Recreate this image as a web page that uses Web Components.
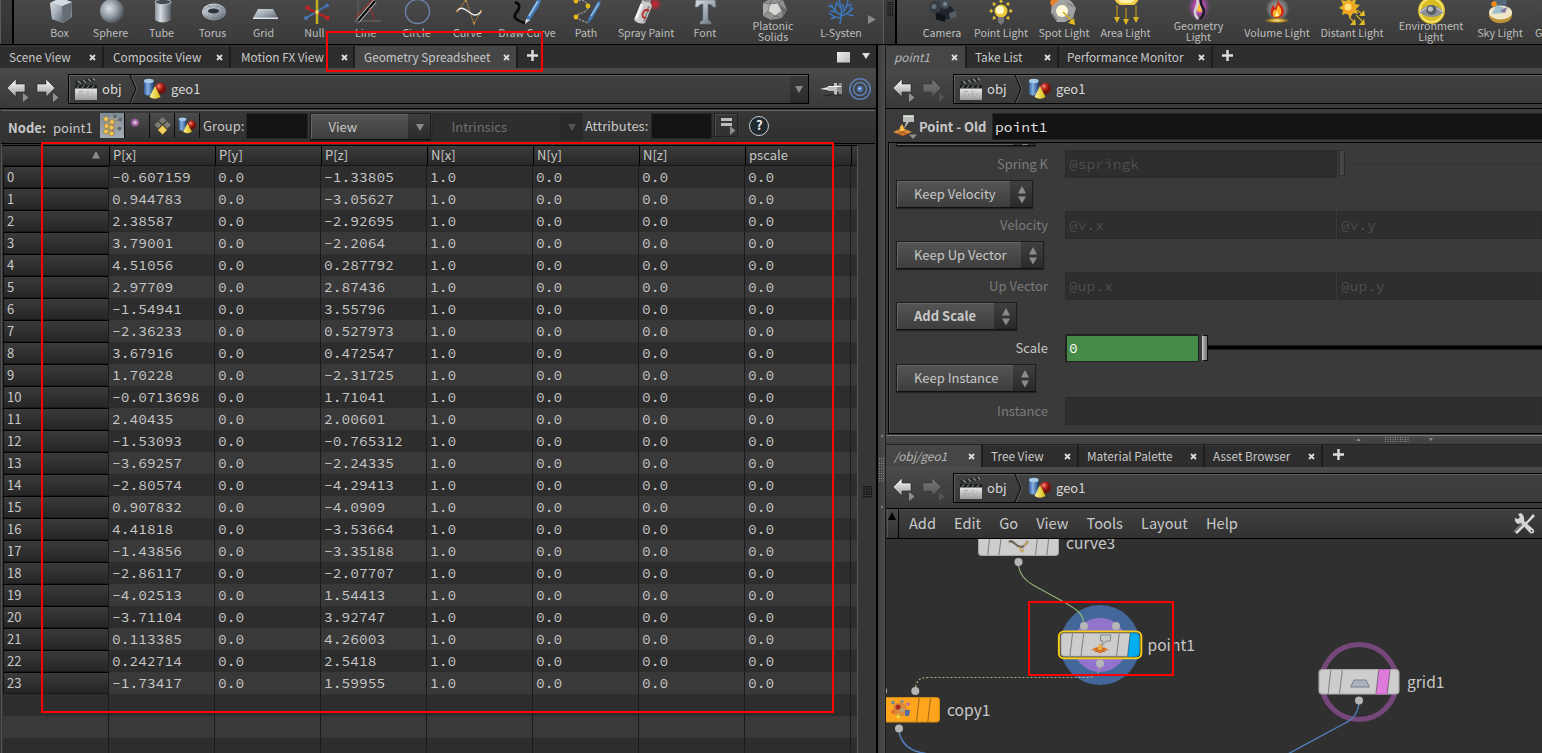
<!DOCTYPE html>
<html lang="en">
<head>
<meta charset="utf-8">
<title>Geometry Spreadsheet</title>
<style>
html,body{margin:0;height:100%;background:#303030;overflow:hidden}
body{font:13px/20px "Noto Sans CJK SC","Noto Sans",sans-serif;color:#c8c8c8}
</style>
</head>
<body>
<app-desktop></app-desktop>
<script>
const define = (name, css, html, after) => {
  customElements.define(name, class extends HTMLElement {
    connectedCallback() {
      if (this.shadowRoot) return;
      const root = this.attachShadow({ mode: 'open' });
      const body = typeof html === 'function' ? html(this) : html;
      root.innerHTML = `<style>*{box-sizing:border-box}${css}</style>${body}`;
      if (after) after(this, root);
    }
  });
};

/* ---------- icons ---------- */
const metal = id => `<linearGradient id="${id}" x1="0" x2="1" y1="0" y2="1"><stop offset="0" stop-color="#d6dce2"/><stop offset=".5" stop-color="#a3abb4"/><stop offset="1" stop-color="#5c646d"/></linearGradient>`;
const rays = (cx, cy, r1, r2, c) => [0,45,90,135,180,225,270,315].map(a => `<g transform="translate(${cx} ${cy}) rotate(${a})"><path d="M${r1} 0H${r2}" stroke="${c}" stroke-width="1.3"/><path d="M${r2-1}-2.2L${r2+2} 0L${r2-1} 2.2Z" fill="${c}"/></g>`).join('');
const ICONS = {
  box: [48,25,`<defs>${metal('m')}</defs><path d="M14 3L24-2L36 2V17L27 23L16 19Z" fill="#8a939c"/><path d="M14 3L26 6L27 23L16 19Z" fill="url(#m)"/><path d="M26 6L36 2L35 17L27 23Z" fill="#656c74"/><path d="M14 3L24-2L36 2L26 6Z" fill="#d5dbe1"/>`],
  sphere: [48,25,`<defs><radialGradient id="g" cx=".38" cy=".4" r=".65"><stop offset="0" stop-color="#dce2e8"/><stop offset=".5" stop-color="#98a1aa"/><stop offset="1" stop-color="#474d53"/></radialGradient></defs><circle cx="25" cy="11" r="12" fill="url(#g)"/>`],
  tube: [48,25,`<defs><linearGradient id="g"><stop offset="0" stop-color="#8b949d"/><stop offset=".35" stop-color="#d6dce2"/><stop offset="1" stop-color="#565d64"/></linearGradient></defs><path d="M17 2V20Q25 25 33 20V2Z" fill="url(#g)"/><ellipse cx="25" cy="2" rx="8" ry="2.600" fill="#434a51" stroke="#b9c0c7"/>`],
  torus: [48,25,`<defs>${metal('m')}</defs><ellipse cx="25" cy="12" rx="12" ry="8.500" fill="url(#m)"/><ellipse cx="24.500" cy="11" rx="5.500" ry="2.600" fill="#30353b"/><path d="M14 10q10-8 21-1M14 15q10 7 21 0M20 5l1 3M29 5l-1 3M18 18l2-3M25 20v-4M32 18l-3-3" stroke="#6d7883" fill="none" stroke-width=".6"/>`],
  grid: [48,25,`<defs>${metal('m')}</defs><path d="M18 9H33L38 18H13Z" fill="url(#m)"/><path d="M13 17.500H38V19H13Z" fill="#dfe3e7"/>`],
  null: [48,25,`<g stroke-width="2"><path d="M15 18L37 5" stroke="#4674b4"/><path d="M16 8L37 18" stroke="#b82222"/><path d="M26 0V24" stroke="#c0ae20" stroke-width="2.600"/></g><g fill="#4674b4"><circle cx="15" cy="18" r="2"/><circle cx="36" cy="5.500" r="2"/></g><g fill="#c02424"><circle cx="16.500" cy="7.500" r="2.200"/><circle cx="36.500" cy="18" r="2.200"/></g><circle cx="26" cy="12" r="1.700" fill="#f2e672"/>`],
  line: [48,25,`<path d="M12 21H39M16-1V24" stroke="#5d5d5d" stroke-width="1.400"/><path d="M16 21L33 1" stroke="#ddd" stroke-width="4"/><path d="M16 21L33 1" stroke="#090909" stroke-width="2.600"/><path d="M13 18L31-1M27 8Q31 12 32 20" stroke="#cf2323" stroke-width="1.300" stroke-dasharray="1.500 1.300" fill="none"/>`],
  circle: [48,25,`<circle cx="24.500" cy="11.500" r="12" fill="none" stroke="#6d82a8" stroke-width="1.400"/>`],
  curve: [48,25,`<path d="M13 12L22 0L30 24L37 11" stroke="#c0843b" stroke-width="1.300" stroke-dasharray="1.300 1.200" fill="none"/><path d="M13 11C17 6 21 9 25 12S32 17 37 12" stroke="#eee" stroke-width="1.500" fill="none"/><path d="M12 10h2v2h-2zM29 22h2v2h-2zM36 10h2v2h-2zM21 0h2v2h-2z" fill="#bd8b4b"/>`],
  draw: [48,25,`<path d="M12 2Q20 5 13 13Q8 19 22 23" stroke="#080808" stroke-width="2.600" fill="none"/><path d="M24 17L34 0H38L36 6L27 20L22 24Z" fill="#4579b6"/><path d="M26 16L35 1" stroke="#9bc4e9" stroke-width="1.500"/><path d="M23 19L27 20L22 24Z" fill="#ddd"/>`],
  path: [48,25,`<path d="M13 1Q23-2 26 6Q27 11 17 14Q12 18 21 21L26 23" stroke="#8f8f8f" stroke-width="1.400" stroke-dasharray="2.500 1" fill="none"/><path d="M27 17L36 1H39L37 7L30 19L25 24Z" fill="#4579b6"/><path d="M29 16L37 3" stroke="#9bc4e9" stroke-width="1.400"/><g fill="#e2bb13"><circle cx="14" cy="1" r="2.400"/><circle cx="26" cy="6" r="2.400"/><circle cx="14" cy="17" r="2.400"/></g>`],
  spray: [48,25,`<defs><radialGradient id="g"><stop offset="0" stop-color="#d9202a"/><stop offset="1" stop-color="#d9202a" stop-opacity="0"/></radialGradient></defs><circle cx="33" cy="4" r="7" fill="url(#g)"/><path d="M20 0L28 2L30 6L23 23Q17 25 12 20L19 4Z" fill="#c9c9c9"/><path d="M20 4L14 19" stroke="#f2f2f2" stroke-width="3"/><path d="M27 6L22 22" stroke="#8c8c8c" stroke-width="2"/><path d="M27 11Q23 8 21 13T24 18" fill="none" stroke="#bc302c" stroke-width="2"/><path d="M24-2H29V2H23Z" fill="#949494"/>`],
  font: [48,25,`<defs>${metal('m')}</defs><path d="M15 0H34L35 7H32Q31 4 27 4V19Q27 21 30 22V24H19V22Q22 21 22 19V4Q18 4 17 7H14Z" fill="url(#m)" stroke="#6b7c8b" stroke-width=".6"/>`],
  solid: [48,25,`<path d="M14 3L24-3L34 0L38 10L33 18L22 20L14 16Z" fill="#8f9191"/><path d="M21 4L29 3L33 11L26 16L19 11Z" fill="#d6d6d3"/><path d="M14 3L21 4L19 11L14 16Z" fill="#a9aaaa"/><path d="M29 3L38 10L33 18L33 11Z" fill="#6e7070"/><path d="M14 3L21 4L24-3M21 4L29 3L34 0M29 3L33 11L38 10M33 11L26 16L33 18M26 16L22 20M26 16L19 11L14 16M21 4L19 11" stroke="#5c5e5e" stroke-width=".6" fill="none"/>`],
  lsys: [48,25,`<g fill="none" stroke="#3c77bd" stroke-width="1.500"><path d="M23 24Q25 15 24 7L22-1M24 15Q17 12 14 4M24 14Q30 9 31 0M24 16Q31 14 36 8M24 18Q18 18 12 13"/><path d="M20 12L13 11M18 10L19 4M16 7L11 6M27 11L26 4M30 6L35 4M30 14L37 16M33 12L34 6M24 8L19 2M18 17L14 19"/></g>`],
  camera: [48,25,`<path d="M17 8L31 4L36 10L33 19L18 20Z" fill="#20262b"/><circle cx="17" cy="7" r="6" fill="#343b41"/><circle cx="27" cy="4" r="5" fill="#434b52"/><circle cx="16" cy="6.500" r="2.500" fill="#657079"/><circle cx="27" cy="4" r="2" fill="#7d8790"/><path d="M18 13L27 15V22L18 19Z" fill="#101417"/><path d="M31 13L38 11V17L32 19Z" fill="#555d65"/>`],
  point: [48,25,`${rays(24,11,8,10,'#dec132')}<circle cx="24" cy="11" r="6.500" fill="#e9c938"/><circle cx="23" cy="10" r="4" fill="#fffacd"/><path d="M21 17H27V22L24 25L21 22Z" fill="#777"/>`],
  spot: [48,25,`<path d="M12 1Q20-7 27-2L32 2L36 8L33 18L25 22L17 22L11 13Z" fill="#a2a2a2"/><path d="M10 2Q13-4 20-1L17 2Q13 4 12 7Z" fill="#e9812b"/><circle cx="22" cy="11" r="6" fill="#fff8d8"/><path d="M12 13L17 20M27 3L34 7M26 20L30 15" stroke="#6f6f6f"/><path d="M23 12L32 21" stroke="#d3ad1b" stroke-width="1.600"/><path d="M34 18L35 25L28 23Z" fill="#e2bc20"/>`],
  area: [48,25,`<path d="M12-1H37Q35 3 32 5H18Q14 3 12-1Z" fill="#f2cd46"/><path d="M15-1H34L29 3H20Z" fill="#fff2a8"/><path d="M15 5V20M24 8V22M34 5V20" stroke="#b08c1b" stroke-width="1.300"/><path d="M12 17H18L15 23ZM21 19H27L24 25ZM31 17H37L34 23Z" fill="#dbb526"/>`],
  geolight: [48,25,`<defs><radialGradient id="g"><stop offset="0" stop-color="#fff0bd"/><stop offset=".45" stop-color="#b34ca7"/><stop offset="1" stop-color="#9a48b0" stop-opacity="0"/></radialGradient></defs><ellipse cx="24" cy="7" rx="11" ry="14" fill="url(#g)"/><path d="M22-1Q24 2 21 8T23 19" stroke="#d5d0da" stroke-width="2.500" fill="none"/><path d="M26-1Q25 3 28 8T25 19" stroke="#1c1a25" stroke-width="2.500" fill="none"/><path d="M22 11L24 3L27 12Z" fill="#ffbf31"/>`],
  volume: [48,25,`<defs><radialGradient id="g"><stop offset="0" stop-color="#bcaaa0"/><stop offset=".7" stop-color="#777"/><stop offset="1" stop-color="#777" stop-opacity="0"/></radialGradient><radialGradient id="h"><stop offset="0" stop-color="#fff09a"/><stop offset=".5" stop-color="#c79b29"/><stop offset="1" stop-color="#b98b20" stop-opacity="0"/></radialGradient></defs><circle cx="24.500" cy="9" r="12" fill="url(#g)"/><path d="M25-1Q25 3 29 6Q33 12 29 16Q24 20 19 16Q16 11 20 5L22 8Q25 4 25-1Z" fill="#cd2818"/><path d="M25 5Q29 8 28 14L25 17H21Q18 13 22 9L23 11Z" fill="#ffb228"/><path d="M24 11L26 16H22Z" fill="#fff3b1"/><ellipse cx="24" cy="20.500" rx="13" ry="2.800" fill="url(#h)"/>`],
  distant: [48,25,`<path d="M21-3L23 1L28-1L27 4L32 5L28 9L30 14L25 13L22 18L19 13L14 15L15 10L11 8L15 5L13 0L18 1Z" fill="#deb32c"/><circle cx="21" cy="8" r="6.500" fill="#f5a51d"/><circle cx="20" cy="7" r="3.500" fill="#ffe17a"/><path d="M28 15L34 21M21 17L26 22M29 10L34 14" stroke="#c9a521" stroke-width="1.400"/><path d="M37 25H31L36 19ZM28 25H22L27 19ZM37 16H31L36 10Z" fill="#e3bd29"/>`],
  env: [48,25,`<circle cx="24.500" cy="10.500" r="13.500" fill="#d9bc24"/><circle cx="24.500" cy="10.500" r="11.500" fill="none" stroke="#f6e977" stroke-width="1.500"/><path d="M12 12Q24-2 37 12Q31 17 25 17Q18 17 12 12Z" fill="#8b9197"/><path d="M13 12Q24 2 36 12" fill="none" stroke="#d9dde1"/><circle cx="24.500" cy="10" r="5" fill="#565c63"/><circle cx="23.500" cy="9" r="2.600" fill="#bac0c6"/>`],
  sky: [48,25,`<path d="M17-4Q27-10 31 2L29 10H20Z" fill="#53687a"/><path d="M13 13V17Q17 24 26 23Q35 22 36 16V11Z" fill="#bb9239"/><ellipse cx="24.500" cy="12.500" rx="11.500" ry="7" fill="#efe6c7"/><path d="M16 14L20 5L32 9L27 13Z" fill="#9dbfce"/><circle cx="18" cy="4" r="2.700" fill="#f58a17"/><path d="M24 11L31 7L29 13L36 16" fill="#8a7396"/>`],
  back: [26,26,`<defs><linearGradient id="g" x2="0" y2="1"><stop offset="0" stop-color="#fff"/><stop offset="1" stop-color="#9b9b9b"/></linearGradient></defs><path d="M1 12L10 3V8H19V16H10V21Z" fill="url(#g)" stroke="#222" stroke-width=".6"/><path d="M17 17L22.500 21.500L17 26Z" fill="#909090"/>`],
  fwd: [26,26,`<defs><linearGradient id="g" x2="0" y2="1"><stop offset="0" stop-color="#fff"/><stop offset="1" stop-color="#9b9b9b"/></linearGradient></defs><path d="M19 12L10 3V8H1V16H10V21Z" fill="url(#g)" stroke="#222" stroke-width=".6"/><path d="M17 17L22.500 21.500L17 26Z" fill="#909090"/>`],
  clap: [24,24,`<defs><linearGradient id="g" x1="0" y1="0" x2="1" y2="1"><stop offset="0" stop-color="#5d6466"/><stop offset="1" stop-color="#3e4445"/></linearGradient></defs><path d="M1 8H23V23H1Z" fill="url(#g)"/><path d="M1 8H23V11.500H1Z" fill="#1f2223"/><path d="M1 4.500L21 .5L22 3.500L2 7.500Z" fill="#23282a"/><path d="M4 4L7 6.500M9 3L12 5.500M14 2L17 4.500M19 1L21 3.500" stroke="#8b9091" stroke-width="1.400"/><path d="M5 8.500L3 11M10 8.500L8 11M15 8.500L13 11M20 8.500L18 11" stroke="#777c7d" stroke-width="1.200"/><path d="M5 14.500H9M12 15H15M4 17H7M9 16.500L10 19M12 17.500H15M17 17H19M5 19H8M14 19.500H17" stroke="#a4aaaa" stroke-width="1.200"/>`],
  shapes: [24,24,`<defs><linearGradient id="a"><stop offset="0" stop-color="#2f5c9c"/><stop offset=".4" stop-color="#86b2df"/><stop offset="1" stop-color="#23477c"/></linearGradient><linearGradient id="b"><stop offset="0" stop-color="#fff59a"/><stop offset="1" stop-color="#d4b70e"/></linearGradient><radialGradient id="c" cx=".35" cy=".3"><stop offset="0" stop-color="#f4917f"/><stop offset=".5" stop-color="#c12a1e"/><stop offset="1" stop-color="#70130e"/></radialGradient></defs><path d="M1 4V17Q5.500 20 10.500 17V4Z" fill="url(#a)"/><ellipse cx="5.800" cy="4" rx="4.800" ry="2.200" fill="#a7c9ea"/><circle cx="17.500" cy="11.500" r="5.700" fill="url(#c)"/><path d="M12 9L17.500 20Q12 23.500 6.500 20Z" fill="url(#b)"/>`],
  pin: [24,20,`<path d="M0 10L8 8V11Z" fill="#eee"/><path d="M8 7H14V4H17V16H14V12H8Z" fill="#bdbdbd"/><path d="M17 6H19V4H22V15H19V13H17Z" fill="#8d8d8d"/><path d="M8 7.500H21" stroke="#f4f4f4"/><path d="M4 17Q12 14 21 17" stroke="#222" fill="none"/>`],
  target: [24,24,`<g fill="none" stroke="#5c7fb5"><circle cx="12" cy="12" r="10.200" stroke-width="1.600"/><circle cx="12" cy="12" r="6.500" stroke-width="1.500"/></g><circle cx="12" cy="12" r="3.200" fill="#4a72b4"/><circle cx="11.500" cy="11.500" r="1.200" fill="#b7cdf0"/>`],
  points: [24,24,`<path d="M7 6L15 3L20 6V15L13 21L7 18Z" fill="#9b9fa0"/><path d="M7 6L13 9L20 6M13 9V21" stroke="#74787a" fill="none"/><g fill="#65696b"><circle cx="15" cy="3.500" r="2"/><circle cx="20" cy="6.500" r="2"/><circle cx="19.500" cy="15.500" r="2"/></g><g fill="#f2c65c" stroke="#93732c" stroke-width=".7"><circle cx="6" cy="6" r="2.500"/><circle cx="12" cy="9" r="2.500"/><circle cx="6.500" cy="13" r="2.500"/><circle cx="11.500" cy="14.500" r="2.500"/><circle cx="6" cy="18.500" r="2.500"/><circle cx="11.500" cy="20.500" r="2.500"/></g>`],
  vertex: [24,24,`<circle cx="10" cy="9.500" r="3" fill="#d8b8d8" stroke="#995d9b" stroke-width="2"/>`],
  prims: [24,24,`<path d="M12.500 4L21 12L12.500 20L4.500 12Z" fill="#7c7c74"/><path d="M8.500 8L16.500 16M16.500 8L8.500 16" stroke="#3b3b38" stroke-width="1.200"/><path d="M12.500 12.500L17 17L12.500 21.500L8 17Z" fill="#f2cf62" stroke="#a98424" stroke-width=".8"/>`],
  list: [22,22,`<path d="M6 5.500H17M6 10.500H17" stroke="#bbb" stroke-width="3"/><path d="M15 12L20.500 16.500L15 21Z" fill="#8b8b8b"/>`],
  pointop: [26,26,`<defs><linearGradient id="g" x2="0" y2="1"><stop offset="0" stop-color="#ffc66a"/><stop offset="1" stop-color="#c05b14"/></linearGradient></defs><path d="M10 1H21V8H16L11 15L13 8H10Z" fill="#b9bdb8"/><path d="M11 2H20V3H11Z" fill="#e5e7e3"/><path d="M0 18L9 14L19 18L10 22Z" fill="url(#g)"/><path d="M7 18V13L9 10L11 14V17Z" fill="#ffbb48"/><path d="M4 16L14 20M14 16L5 20" stroke="#8f4310" stroke-width=".7"/><path d="M16 20.500H24L20 25Z" fill="#919191"/>`],
  tools: [24,24,`<path d="M3 20L16 8L21 2L23 4L17 10L5 22Z" fill="#ddd"/><path d="M2 20L13 9" stroke="#777" stroke-width="2"/><path d="M6 2L8 5L6 7L3 6Q2 10 6 12L9 11L17 20Q20 23 22 20Q23 18 20 16L12 9Q13 4 9 1Z" fill="#d3d3d3"/><circle cx="19.500" cy="19" r="1" fill="#555"/>`]
};
const svg = (name, w, h) => { const [a, b, s] = ICONS[name]; return `<svg width="${w || a}" height="${h || b}" viewBox="0 0 ${a} ${b}" style="display:block;flex:none;overflow:visible">${s}</svg>`; };
define('ui-icon', ':host{display:block;flex:none}', e => svg(e.getAttribute('name'), e.getAttribute('w'), e.getAttribute('h')));

/* ---------- shelf ---------- */
define('shelf-tool', `
:host{display:flex;flex-direction:column;align-items:center;flex:none;height:44px;overflow:hidden}
.icon{height:22px;flex:none}.label{height:20px;display:flex;align-items:center;text-align:center;white-space:nowrap;font-size:10.7px;line-height:11px;color:#bebebe}
:host([two]) .label{position:relative;top:-1.5px}
:host([start]){align-items:flex-start}`,
e => `<div class="icon">${e.hasAttribute('icon') ? svg(e.getAttribute('icon')) : ''}</div><div class="label"><slot></slot></div>`);
define('shelf-bar', `
:host{display:flex;height:44px;overflow:hidden;background:linear-gradient(#484848,#3a3a3a);min-width:0}
.grip{flex:none;width:14px;border-left:1px solid #5a5a5a;background:linear-gradient(#3c3c3c,#323232);border-right:2px solid #000;display:flex;justify-content:center}
.tools{display:flex;padding-left:var(--lead)}`,
e => `<div class="grip">${e.hasAttribute('dots') ? '<svg width="6" height="18"><g stroke="#0c0c0c" stroke-width="1.200" stroke-dasharray="1.200 .9"><path d="M1 2V17M3.200 2V17M5.400 2V17"/></g></svg>' : ''}</div><div class="tools"><slot></slot></div>`);

/* ---------- tabs ---------- */
const CROSS = `<svg width="7" height="7" viewBox="0 0 7 7" style="display:block"><path d="M1 1L6 6M6 1L1 6" stroke="#dcdcdc" stroke-width="1.800"/></svg>`;
define('pane-tab', `
:host{display:flex;align-items:center;justify-content:space-between;flex:none;height:22px;padding:0 6px 0 9px;font-size:11.8px;line-height:22px;white-space:nowrap;background:#2d2d2d;border-right:2px solid #1d1d1d;box-shadow:inset 0 1px #383838}
:host([active]){background:#464646;box-shadow:none}
:host([it]) span{font-style:italic;color:#b6b6b6}`, `<span><slot></slot></span>${CROSS}`);
define('tab-bar', `
:host{display:flex;height:23px;background:#2e2e2e;padding-top:1px}
.plus{flex:none;margin:3px 0 0 var(--plus,8px)}.end{margin-left:auto;display:flex}`,
`<slot></slot><svg class="plus" width="13" height="13" viewBox="0 0 13 13"><path d="M6.500 1V12M1 6.500H12" stroke="#ddd" stroke-width="2.400"/></svg><div class="end"><slot name="end"></slot></div>`);

/* ---------- path row ---------- */
define('path-bar', `
:host{display:flex;height:41px;padding:6px 0 0 6px;background:linear-gradient(#4a4a4a,#393939);border-bottom:1px solid #000;flex:none}
.nav{display:flex;width:62px;gap:4px;padding-top:2px;flex:none}
:host([open]) .nav{width:61px}
.nav .off{opacity:.28}
.box{flex:1;height:30px;border:1px solid #000;background:linear-gradient(#414141,#393939);box-shadow:inset 1px 1px #606060;display:flex;align-items:center;min-width:0;padding-left:5px;color:#d8d8d8;white-space:nowrap}
:host([open]) .box{border-right:0}
.obj{margin-left:4px}.chev{margin:0 5px 0 7px}.geo{margin-left:4.500px}
.drop{margin-left:auto;width:18px;height:27px;background:linear-gradient(#3a3a3a,#2a2a2a);display:flex;align-items:center;justify-content:center;padding-top:1px}
.tail{display:flex;align-items:flex-start;padding:3px 4px 0 11px;gap:4px}.tail :first-child{position:relative;top:1.500px}
:host([open]) .tail,:host([open]) .drop{display:none}`,
e => `<div class="nav">${svg('back')}<div class="${e.hasAttribute('open') ? 'off' : ''}">${svg('fwd')}</div></div>
<div class="box">${svg('clap')}<span class="obj">obj</span><svg class="chev" width="9" height="28" viewBox="0 0 9 28"><path d="M1 0L7 14L1 28" fill="none" stroke="#0d0d0d" stroke-width="1.200"/><path d="M2.200 0L8.200 14L2.200 28" fill="none" stroke="#5e5e5e"/></svg>${svg('shapes')}<span class="geo">geo1</span><div class="drop"><svg width="8" height="7"><path d="M0 0H8L4 7Z" fill="#8a8a8a"/></svg></div></div>
<div class="tail">${svg('pin')}${svg('target')}</div>`);

/* ---------- controls ---------- */
define('menu-select', `
:host{display:flex;flex:none;border:1px solid #1e1e1e;border-bottom-color:#101010;box-shadow:0 1px 1px #222;white-space:nowrap;background:linear-gradient(#555,#3d3d3d);box-sizing:border-box}
.t{flex:1;display:flex;align-items:center;padding-left:var(--pad,17px);box-shadow:inset 1px 1px #646464}
.a{width:22px;background:linear-gradient(#3f3f3f,#2a2a2a);display:flex;align-items:center;justify-content:center}
.a svg{position:relative;left:.5px;top:.5px}
:host([bold]){font-weight:700}
:host([off]){background:#2e2e2e;border-color:#2a2a2a;box-shadow:none;color:#707070}:host([off]) .t{box-shadow:none}:host([off]) .a{background:#292929}:host([off]) svg{opacity:.45}`,
e => `<div class="t"><slot></slot></div><div class="a">${e.hasAttribute('updown') ? '<svg width="8" height="18" viewBox="0 0 8 18"><path d="M4 0L8 7.500H0ZM4 17.500L0 10.500H8Z" fill="#8b8b8b"/></svg>' : '<svg width="8" height="7"><path d="M0 0H8L4 7Z" fill="#8a8a8a"/></svg>'}</div>`);
define('text-field', `
:host{display:flex;align-items:center;background:#131313;border:1px solid #262626;white-space:pre;overflow:hidden;font:14.6px/20px "Source Code Pro","Liberation Mono",monospace;color:#e6e6e6;padding-left:2px;box-sizing:border-box}
:host([off]){background:#2e2e2e;border-color:#2b2b2b;color:#4f4f4f;padding-left:3px}
:host([green]){background:#468b47;border:1px solid #222;box-shadow:inset 1px 1px #222;color:#fff;padding-left:3px}`, `<slot></slot>`);
define('param-row', `
:host{display:flex;height:28px;flex:none;color:#c8c8c8}
.l{width:159px;flex:none;text-align:right;display:flex;align-items:center;justify-content:flex-end;margin-right:17px}
:host([off]) .l{color:#7b7b7b}`, e => `<div class="l">${e.getAttribute('label')}</div><slot></slot>`);

define('sheet-toolbar', `
:host{display:flex;height:34px;flex:none;margin:1px 0 0 1px;border-top:1px solid #646464;border-bottom:1px solid #000;background:linear-gradient(#373737,#303030);padding:2px 0 0 7px;white-space:nowrap;width:874px;box-sizing:border-box}
b,.n{line-height:29px}.n{margin:0 7px}
.btns{display:flex;gap:1px;background:#0c0c0c;height:25px;width:100px;flex:none}
.btns div{width:24px;height:25px;background:linear-gradient(#4b4b4b,#333)}
.btns .on{background:linear-gradient(#7d8b97,#a4aeb7)}
.btns .sm{display:flex;align-items:center;justify-content:center;padding-left:2px}
.g{margin:0 2px 0 3.500px;line-height:25px}
text-field{height:26px}
.lst{width:24px;height:24px;border:1px solid #222;box-shadow:inset 1px 1px #4c4c4c;margin-left:2px}
.help{width:20px;height:20px;border-radius:50%;background:#202a30;border:1.500px solid #ccd0d2;margin:3px 0 0 11px;font-weight:700;font-size:13px;line-height:16px;text-align:center;color:#eee}`,
`<b>Node:</b><span class="n">point1</span><div class="btns"><div class="on">${svg('points')}</div><div>${svg('vertex')}</div><div>${svg('prims')}</div><div class="sm">${svg('shapes',19,19)}</div></div>
<span class="g">Group:</span><text-field style="width:62px"></text-field>
<menu-select style="width:121px;height:27px;margin-left:2px;--pad:17px">View</menu-select>
<menu-select off style="width:151px;height:27px;margin-left:1px;--pad:18px">Intrinsics</menu-select>
<span class="g" style="margin-right:3px;margin-left:1.500px">Attributes:</span><text-field style="width:61px"></text-field>
<div class="lst">${svg('list')}</div>
<div class="help">?</div>`);

/* ---------- spreadsheet ---------- */
const PX = "-0.607159 0.944783 2.38587 3.79001 4.51056 2.97709 -1.54941 -2.36233 3.67916 1.70228 -0.0713698 2.40435 -1.53093 -3.69257 -2.80574 0.907832 4.41818 -1.43856 -2.86117 -4.02513 -3.71104 0.113385 0.242714 -1.73417".split(' ');
const PZ = "-1.33805 -3.05627 -2.92695 -2.2064 0.287792 2.87436 3.55796 0.527973 0.472547 -2.31725 1.71041 2.00601 -0.765312 -2.24335 -4.29413 -4.0909 -3.53664 -3.35188 -2.07707 1.54413 3.92747 4.26003 2.5418 1.59955".split(' ');
define('geo-sheet', `
:host{display:block;flex:1;overflow:hidden;background:#363636;border-left:1px solid #555;margin-left:1px;padding-top:1px}
.t{width:856px;border-right:1px solid #585858;border-top:1px solid #000;padding-left:1px}
.r{display:grid;grid-template-columns:106px repeat(7,106px) 1fr;height:22px;background:#2d2d2d;line-height:22px;white-space:nowrap}
.r:nth-child(odd){background:#393939}
.r>*{border-right:1px solid #1b1b1b;padding-left:3px;font-family:"Source Code Pro","Liberation Mono",monospace;font-size:14.6px;overflow:hidden}
.r>:last-child{border-right:0}
.r>.n{font:13px/20px "Noto Sans CJK SC",sans-serif;border-top:1px solid #000;border-left:1px solid #111;background:linear-gradient(#3a3a3a,#262626);border-bottom:1px solid #1a1a1a}
.r.h{height:20px;border-bottom:1px solid #161616;background:linear-gradient(#3c3c3c,#272727);line-height:17px}
.h>*{font:13px/17px "Noto Sans CJK SC",sans-serif;border-right:1px solid #000;padding-left:3px;position:relative;left:1px}
.h svg{display:block;margin:5px 0 0 85px}`,
() => `<div class="t"><div class="r h"><span><svg width="8" height="8"><path d="M4 0L8 7.500H0Z" fill="#8c8c8c"/></svg></span>${['P[x]','P[y]','P[z]','N[x]','N[y]','N[z]','pscale',''].map(c => `<span>${c}</span>`).join('')}</div>${
  Array.from({ length: 27 }, (_, i) => i < 24 ? `<div class="r"><span class="n">${i}</span>${[PX[i],'0.0',PZ[i],'1.0','0.0','0.0','0.0',''].map(c => `<span>${c}</span>`).join('')}</div>` : `<div class="r">${'<span></span>'.repeat(9)}</div>`).join('')}</div>`);

/* ---------- parameters ---------- */
define('param-panel', `
:host{display:block;height:325px;flex:none;background:#3a3a3a}
.head{height:33px;display:flex;align-items:flex-start;padding:5px 0 0 7px;background:#3b3b3b}
.head b{margin:2px 0 0 0;line-height:21px;width:73px;white-space:nowrap}
.head text-field{flex:1;height:27px;border-right:0;margin-top:-1px}
.in{height:292px;margin-left:2px;border:1px solid #000;border-right:0;box-shadow:inset 1px 0 #555;overflow:hidden;display:flex;flex-direction:column}
menu-select{height:28px;margin-left:7px}
.f{height:28px}
.line{flex:1;height:5px;margin-top:11px;border:solid #1c1c1c;border-width:1px 0;background:#000}
.knob{width:6px;height:26px;margin:1px 0 0 3px;background:linear-gradient(90deg,#aaa,#777);border:1px solid #111;border-left-color:#ccc}
.ghost{width:6px;height:26px;margin:0 0 0 2px;background:linear-gradient(90deg,#4a4a4a,#434343);border:1px solid #2d2d2d}`,
`<div class="head">${svg('pointop')}<b>Point - Old</b><text-field>point1</text-field></div>
<div class="in">
<menu-select style="width:140px;height:3px;margin-bottom:4px;overflow:hidden;background:#333"></menu-select>
<param-row off label="Spring K"><text-field off style="width:272px;height:28px">@springk</text-field><div class="ghost"></div><div class="line" style="opacity:.25;height:1px;background:#222;border:0;margin-top:13px"></div></param-row>
<menu-select updown style="width:137px;margin-top:2px">Keep Velocity</menu-select>
<param-row off label="Velocity" style="margin-top:3px"><text-field off class="f" style="width:271px">@v.x</text-field><text-field off class="f" style="flex:1;margin-left:1px">@v.y</text-field></param-row>
<menu-select updown style="width:148px;margin-top:2px">Keep Up Vector</menu-select>
<param-row off label="Up Vector" style="margin-top:3px"><text-field off class="f" style="width:271px">@up.x</text-field><text-field off class="f" style="flex:1;margin-left:1px">@up.y</text-field></param-row>
<menu-select updown bold style="width:121px;margin-top:2px">Add Scale</menu-select>
<param-row label="Scale" style="margin-top:4px"><text-field green style="width:134px;height:28px">0</text-field><div class="knob"></div><div class="line"></div></param-row>
<menu-select updown style="width:140px;margin-top:2px">Keep Instance</menu-select>
<param-row off label="Instance" style="margin-top:5px"><text-field off style="flex:1"></text-field></param-row>
</div>`);

/* ---------- network editor ---------- */
define('net-menu', `
:host{display:flex;height:30px;flex:none;border-bottom:1px solid #000;background:linear-gradient(#404040,#313131);font-size:14.600px;line-height:28px;white-space:nowrap;box-shadow:inset 0 1px #4d4d4d}
.pull{width:12px;flex:none;margin-left:1px;border-right:1px solid #000;padding:3px 0 0 1px;background:linear-gradient(#4a4a4a,#333);box-shadow:inset 1px 0 #555}
nav{display:flex;padding-left:10px;flex:1;gap:18.100px}
ui-icon{margin:3px 6px 0 0}`,
`<div class="pull"><svg width="8" height="8" style="display:block"><path d="M4 0L8 8H0Z" fill="#000"/></svg></div><nav><span>Add</span><span>Edit</span><span>Go</span><span>View</span><span>Tools</span><span>Layout</span><span>Help</span></nav><ui-icon name="tools"></ui-icon>`);

const nodeBox = (x, y, fill, extra = '') => `<g transform="translate(${x} ${y})"><rect width="81" height="25.500" rx="4" fill="${fill}"/>${extra}<g stroke="#000" stroke-opacity=".36" fill="none" stroke-width="1.100"><path d="M12.300 1L9.700 24.500M23.800 1L21 24.500M60.200 1L57.500 24.500M71.500 1L68.800 24.500"/><rect x=".5" y=".5" width="80" height="24.500" rx="4" stroke-opacity=".18"/></g></g>`;
const dot = (x, y) => `<circle cx="${x}" cy="${y}" r="4" fill="#b5b5b5"/>`;
define('net-canvas', `
:host{display:block;position:relative;flex:1;overflow:hidden;background:#303030}
svg{position:absolute;left:0;top:0}
span{position:absolute;font-size:15.600px;line-height:24px;color:#c8c8c8;white-space:nowrap}`,
`<svg width="656" height="214" viewBox="886 539 656 214">
<circle cx="1100" cy="645" r="40" fill="#44679a"/><circle cx="1100" cy="645" r="27" fill="#9274cc"/>
<circle cx="1359" cy="682" r="37.500" fill="none" stroke="#76477a" stroke-width="5.200"/>
<g fill="none" stroke-width="1.200"><path d="M1018.500 566C1020 576 1026 581 1033 585L1064 602C1076 609 1083 613 1083.700 623" stroke="#8fae78"/>
<path d="M915.500 687C917 680 920 677.500 928 677.500H1088C1096 677 1099 672 1100 667" stroke="#a3b886" stroke-dasharray="2 2"/>
<path d="M899 732C902 745 912 752 926 753.500M1359 704C1357 716 1351 720 1347 722L1286 755" stroke="#5380c0" stroke-width="1.400"/></g>
${nodeBox(978,530.500,'#cdcdcd')}
<path d="M1009 542C1012 539 1014 544 1018 546S1024 547 1028 541" stroke="#6f675e" stroke-width="2.200" fill="none"/><path d="M1028 541L1024 546M1019 547L1022 551" stroke="#c9a562" fill="none" stroke-width="1.600"/><path d="M1020 549H1024V551L1022 553L1020 551Z" fill="#c9a870"/>
<rect x="1058.900" y="631.400" width="82.400" height="26.800" rx="5" fill="#111" stroke="#f5cd1e" stroke-width="2"/>
<g transform="translate(1100 644.700) scale(.975 .95) translate(-1100 -644.700)">${nodeBox(1059.500,632,'#cdcdcd','<path d="M71.500 0H77Q81 0 81 4V21.500Q81 25.500 77 25.500H68.800Z" fill="#00aef2"/>')}</g>
<path d="M1100.500 635H1110.500V641H1106L1101 647L1103 641H1100.500Z" fill="#c9cdc8" stroke="#777" stroke-width=".8"/><path d="M1091 649.500L1100 646L1109 649.500L1100 653.500Z" fill="#df7d28"/><path d="M1095 648L1105 652M1105 648L1095 652" stroke="#94531f" stroke-width=".6"/><path d="M1098 650V646L1100 643L1102 647V650Z" fill="#f0ad43"/>
${nodeBox(859,697,'#ffa51d')}
<circle cx="900" cy="709.500" r="7" fill="#d98a3c"/><g><circle cx="893" cy="702.500" r="2" fill="#7b8b92"/><circle cx="902" cy="701.500" r="1.800" fill="#8a9088"/><circle cx="908" cy="704" r="1.800" fill="#bb6ca4"/><circle cx="898" cy="707" r="2.600" fill="#a82e22"/><circle cx="902" cy="710" r="1.700" fill="#a5b594"/><path d="M905 710h5l-1 6h-4z" fill="#4e6ea2"/><circle cx="893" cy="712" r="2" fill="#e8692d"/><path d="M898 713l3 5h-5z" fill="#ead33b"/></g>
${nodeBox(1318.500,669,'#cdcdcd','<path d="M60.200 0H71.500L68.800 25.500H57.500Z" fill="#de7cdb"/>')}
<path d="M1354 680H1366L1369.500 687H1350.500Z" fill="#aab3bd" stroke="#70777f" stroke-width=".9"/>
${dot(1018.500,562)}${dot(1084,626)}${dot(1116,626)}${dot(1100,663.500)}${dot(915.300,691)}${dot(883,691)}${dot(899,728.500)}${dot(1359,700.500)}
</svg>
<span style="left:180px;top:-9px">curve3</span><span style="left:261.500px;top:93px">point1</span><span style="left:61px;top:158px">copy1</span><span style="left:521px;top:130px">grid1</span>`);

/* ---------- frame ---------- */
define('split-h', `
:host{display:block;height:10px;flex:none;background:linear-gradient(#4a4a4a,#3f3f3f);border-top:1px solid #7c7c7c;border-bottom:1px solid #222;position:relative}
svg{position:absolute;left:470px;top:1px}`,
`<svg width="80" height="6"><path d="M2.500 1L4.500 4H.500ZM73 1H77L75 4Z" fill="#8b8b8b"/><g stroke="#8d8d8d" stroke-width="1" stroke-dasharray="1 1.500"><path d="M29 .5H53M29 2.500H53M29 4.500H53"/></g></svg>`);
define('split-v', `
:host{display:block;width:8px;background:linear-gradient(90deg,#3f3f3f,#4b4b4b);border-right:1px solid #1d1d1d;position:relative}
svg{position:absolute;left:1px;top:389px}`,
`<svg width="6" height="80"><path d="M4 .5V3.500L1.500 2ZM2 71.500V74.500L4.500 73Z" fill="#8b8b8b"/><g stroke="#8d8d8d" stroke-width="1" stroke-dasharray="1 1.500"><path d="M.5 24V48M2.500 24V48M4.500 24V48"/></g></svg>`);
define('mark-box', `:host{display:block;position:absolute;border:2px solid #f00;box-sizing:border-box;pointer-events:none}`, '');

const tool = (icon, w, label, two) => `<shelf-tool icon="${icon}" ${two ? 'two' : ''} style="width:${w}px">${label}</shelf-tool>`;
define('app-desktop', `
:host{display:grid;grid-template-rows:45px 1fr;width:1542px;height:753px;position:relative;overflow:hidden;background:#000}
.shelves{display:grid;grid-template-columns:883px 1fr;border-bottom:1px solid #000;min-width:0}
.work{display:grid;grid-template-columns:876px 1fr;gap:2px;min-height:0}
.left,.right{display:flex;flex-direction:column;min-width:0;overflow:hidden;background:#363636;position:relative}
.rw{display:grid;grid-template-columns:8px 1fr;min-height:0}
.more{align-self:flex-start;margin:15px 0 0 2px}
.end{display:flex;align-items:flex-start;padding:6px 6px 0 0;gap:11px}
.grip{position:absolute;left:863px;top:440.500px;width:9px;height:12px}`,
`<div class="shelves"><shelf-bar style="--lead:20px">${
 tool('box',51,'Box')+tool('sphere',51,'Sphere')+tool('tube',51,'Tube')+tool('torus',51,'Torus')+tool('grid',51,'Grid')+tool('null',51,'Null')+tool('line',51,'Line')+tool('circle',51,'Circle')+tool('curve',51,'Curve')+tool('draw',68,'Draw Curve')+tool('path',50,'Path')+tool('spray',70,'Spray Paint')+tool('font',48,'Font')+tool('solid',88,'Platonic<br>Solids',1)+tool('lsys',48,'L-Systen')
}<svg class="more" width="9" height="10"><path d="M1 0L9 4.500L1 9Z" fill="#8a8a8a"/></svg></shelf-bar>
<shelf-bar dots style="--lead:15px">${
 tool('camera',60,'Camera')+tool('point',58,'Point Light')+tool('spot',68,'Spot Light')+tool('area',55,'Area Light')+tool('geolight',91,'Geometry<br>Light',1)+tool('volume',66,'Volume Light')+tool('distant',84,'Distant Light')+tool('env',74,'Environment<br>Light',1)+tool('sky',64,'Sky Light')
}<shelf-tool start style="width:10px;padding-left:3px">G</shelf-tool></shelf-bar></div>
<div class="work"><div class="left">
<tab-bar><pane-tab style="width:104px">Scene View</pane-tab><pane-tab style="width:127px">Composite View</pane-tab><pane-tab style="width:124px;padding-right:5px;padding-left:10px">Motion FX View</pane-tab><pane-tab active style="width:163px">Geometry Spreadsheet</pane-tab>
<div slot="end" class="end"><svg width="14" height="11"><defs><linearGradient id="g" x2="1" y2="1"><stop offset="0" stop-color="#eee"/><stop offset="1" stop-color="#bbb"/></linearGradient></defs><rect width="13" height="10.500" fill="url(#g)"/></svg><svg width="8" height="8"><path d="M0 1H8L4 7Z" fill="#ddd"/></svg></div></tab-bar>
<path-bar></path-bar><sheet-toolbar></sheet-toolbar><geo-sheet></geo-sheet>
<svg class="grip" width="9" height="12"><g stroke="#080808" stroke-width="1.300" stroke-dasharray="1.500 1"><path d="M1 0V12M3.500 0V12M6 0V12M8.500 0V12"/></g></svg>
</div>
<div class="rw"><split-v></split-v><div class="right">
<tab-bar style="--plus:7.500px"><pane-tab active it style="width:81px;padding-left:8px;padding-right:7px">point1</pane-tab><pane-tab style="width:92px;padding-left:8px">Take List</pane-tab><pane-tab style="width:154px;padding-left:8px">Performance Monitor</pane-tab></tab-bar>
<path-bar open></path-bar><param-panel></param-panel>
<div style="height:1px;background:#333;flex:none"></div>
<split-h></split-h>
<tab-bar style="--plus:8.500px;height:22px;padding-top:0"><pane-tab active it style="width:97px;padding-left:8px">/obj/geo1</pane-tab><pane-tab style="width:96px;padding-left:8px">Tree View</pane-tab><pane-tab style="width:126px;padding-left:8px">Material Palette</pane-tab><pane-tab style="width:118px;padding-left:8px">Asset Browser</pane-tab></tab-bar>
<path-bar open style="height:42px"></path-bar><net-menu></net-menu><net-canvas></net-canvas>
</div></div></div>
<mark-box style="left:326px;top:31px;width:217px;height:41px"></mark-box>
<mark-box style="left:41px;top:142px;width:793px;height:571px"></mark-box>
<mark-box style="left:1028px;top:601px;width:146px;height:75px"></mark-box>`);
</script>
</body>
</html>
